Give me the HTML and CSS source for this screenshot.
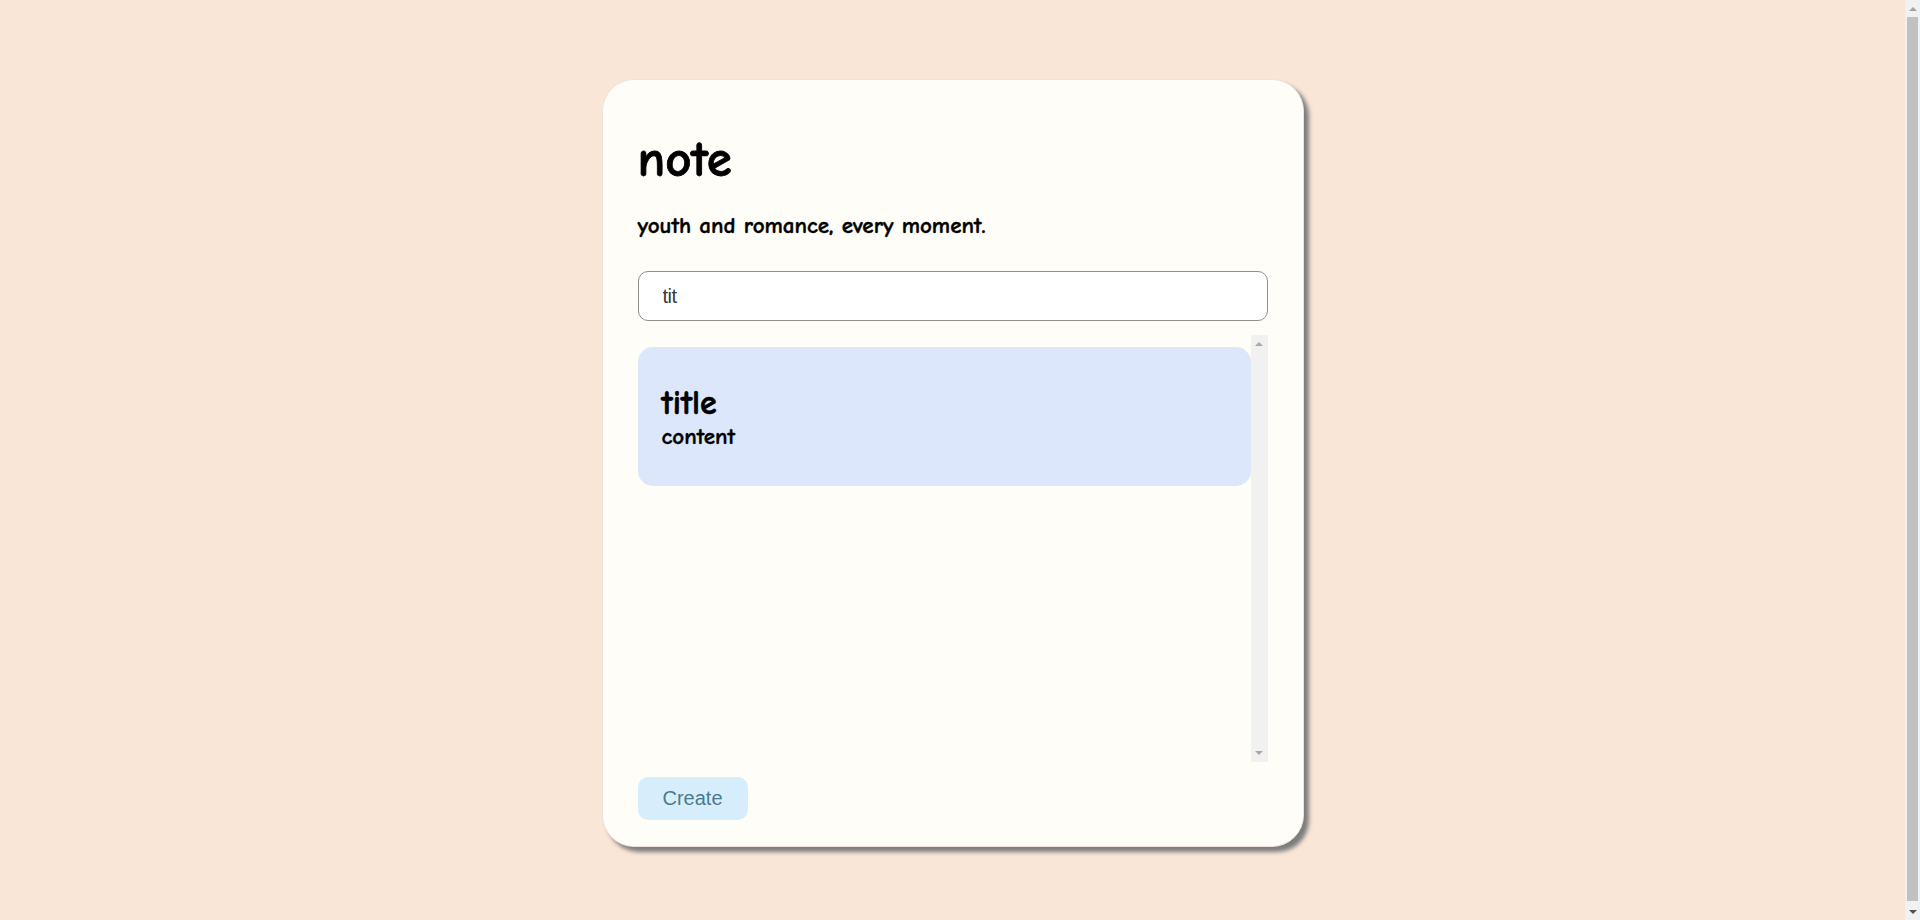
FILE: index.html
```html
<!DOCTYPE html>
<html lang="en">
<head>
<meta charset="utf-8">
<title>note</title>
<link rel="stylesheet" href="styles.css">
</head>
<body>
<div class="page">
  <main class="card">
    <h1 class="heading">note</h1>
    <p class="tagline">youth and romance, every moment.</p>
    <input class="search" type="text" value="tit" autofocus>
    <div class="list">
      <div class="list-items">
        <div class="note">
          <h3 class="note-title">title</h3>
          <p class="note-content">content</p>
        </div>
      </div>
      <div class="list-track">
        <span class="arrow arrow-up light"></span>
        <span class="arrow arrow-down light"></span>
      </div>
    </div>
    <div class="actions">
      <button class="create" type="button">Create</button>
    </div>
  </main>
</div>
<div class="page-scrollbar" aria-hidden="true">
  <span class="sb-btn"><span class="arrow arrow-up mid"></span></span>
  <span class="sb-thumb"></span>
  <span class="sb-btn"><span class="arrow arrow-down dark"></span></span>
</div>
</body>
</html>
```

FILE: styles.css
```css
html, body {
  margin: 0;
  padding: 0;
}
body {
  background: #fae6d7;
  font-family: "Comic Sans MS", "Comic Neue", "Open Sans", "DejaVu Sans", sans-serif;
  color: #000;
  overflow: hidden;
}

.page {
  margin-right: 15px;
  padding: 79px 0 78px;
}
.card {
  width: 702px;
  height: 768px;
  box-sizing: border-box;
  margin: 0 auto;
  padding: 34px 35px 25px;
  background: #fffdf8;
  border: 1px solid #eee3d8;
  border-radius: 32px;
  box-shadow: 5px 5px 4px #7d7d7d;
  display: flex;
  flex-direction: column;
}
.heading {
  margin: 18px 0 0;
  font-size: 51px;
  line-height: 56px;
  font-weight: 700;
  -webkit-text-stroke: 0.8px #000;
}
.tagline {
  margin: 23px 0 0;
  font-size: 23px;
  line-height: 30px;
  font-weight: 700;
  -webkit-text-stroke: 0.4px #000;
}
.search {
  margin: 30px 0 0;
  height: 50px;
  box-sizing: border-box;
  width: 100%;
  padding: 0 24px;
  border: 1px solid #8f8f8f;
  border-radius: 10px;
  background: #fff;
  font-family: "Liberation Sans", Arial, sans-serif;
  font-size: 20px;
  letter-spacing: -0.5px;
  color: #3a3a3a;
  caret-color: #000;
  outline: none;
}

/* note list with its classic scrollbar track */
.list {
  margin-top: 14px;
  height: 427px;
  display: flex;
}
.list-items {
  flex: 1;
  padding-top: 12px;
}
.list-track {
  width: 17px;
  background: #f1f1f1;
  display: flex;
  flex-direction: column;
  justify-content: space-between;
  align-items: center;
  padding: 7px 0 7px;
  box-sizing: border-box;
}
.note {
  height: 139px;
  box-sizing: border-box;
  padding: 37px 24px;
  background: #dce7fb;
  border-radius: 15px;
}
.note-title {
  margin: 0;
  font-size: 34px;
  line-height: 38px;
  font-weight: 700;
  -webkit-text-stroke: 0.6px #000;
}
.note-content {
  margin: 0;
  font-size: 23px;
  line-height: 30px;
  font-weight: 700;
  -webkit-text-stroke: 0.4px #000;
}
.actions {
  margin-top: 15px;
}
.create {
  height: 43px;
  padding: 0 25px;
  border: none;
  border-radius: 10px;
  background: #d6eefc;
  color: #4a7a8c;
  font-family: "Liberation Sans", Arial, sans-serif;
  font-size: 20px;
  cursor: pointer;
}

/* arrows */
.arrow {
  display: block;
  width: 0;
  height: 0;
  border-left: 4px solid transparent;
  border-right: 4px solid transparent;
}
.arrow-up.light { border-bottom: 4px solid #a8a8a8; }
.arrow-down.light { border-top: 4px solid #a8a8a8; }
.arrow-up.mid { border-bottom: 4px solid #a3a3a3; }
.arrow-down.dark { border-top: 4px solid #505050; }

/* page scrollbar (browser chrome) */
.page-scrollbar {
  position: fixed;
  top: 0;
  right: 0;
  bottom: 0;
  width: 15px;
  background: #f1f1f1;
  display: flex;
  flex-direction: column;
}
.sb-btn {
  height: 17px;
  display: flex;
  align-items: center;
  justify-content: center;
}
.sb-thumb {
  flex: 1;
  margin: 0 2px 2px;
  background: #c1c1c1;
}
```
